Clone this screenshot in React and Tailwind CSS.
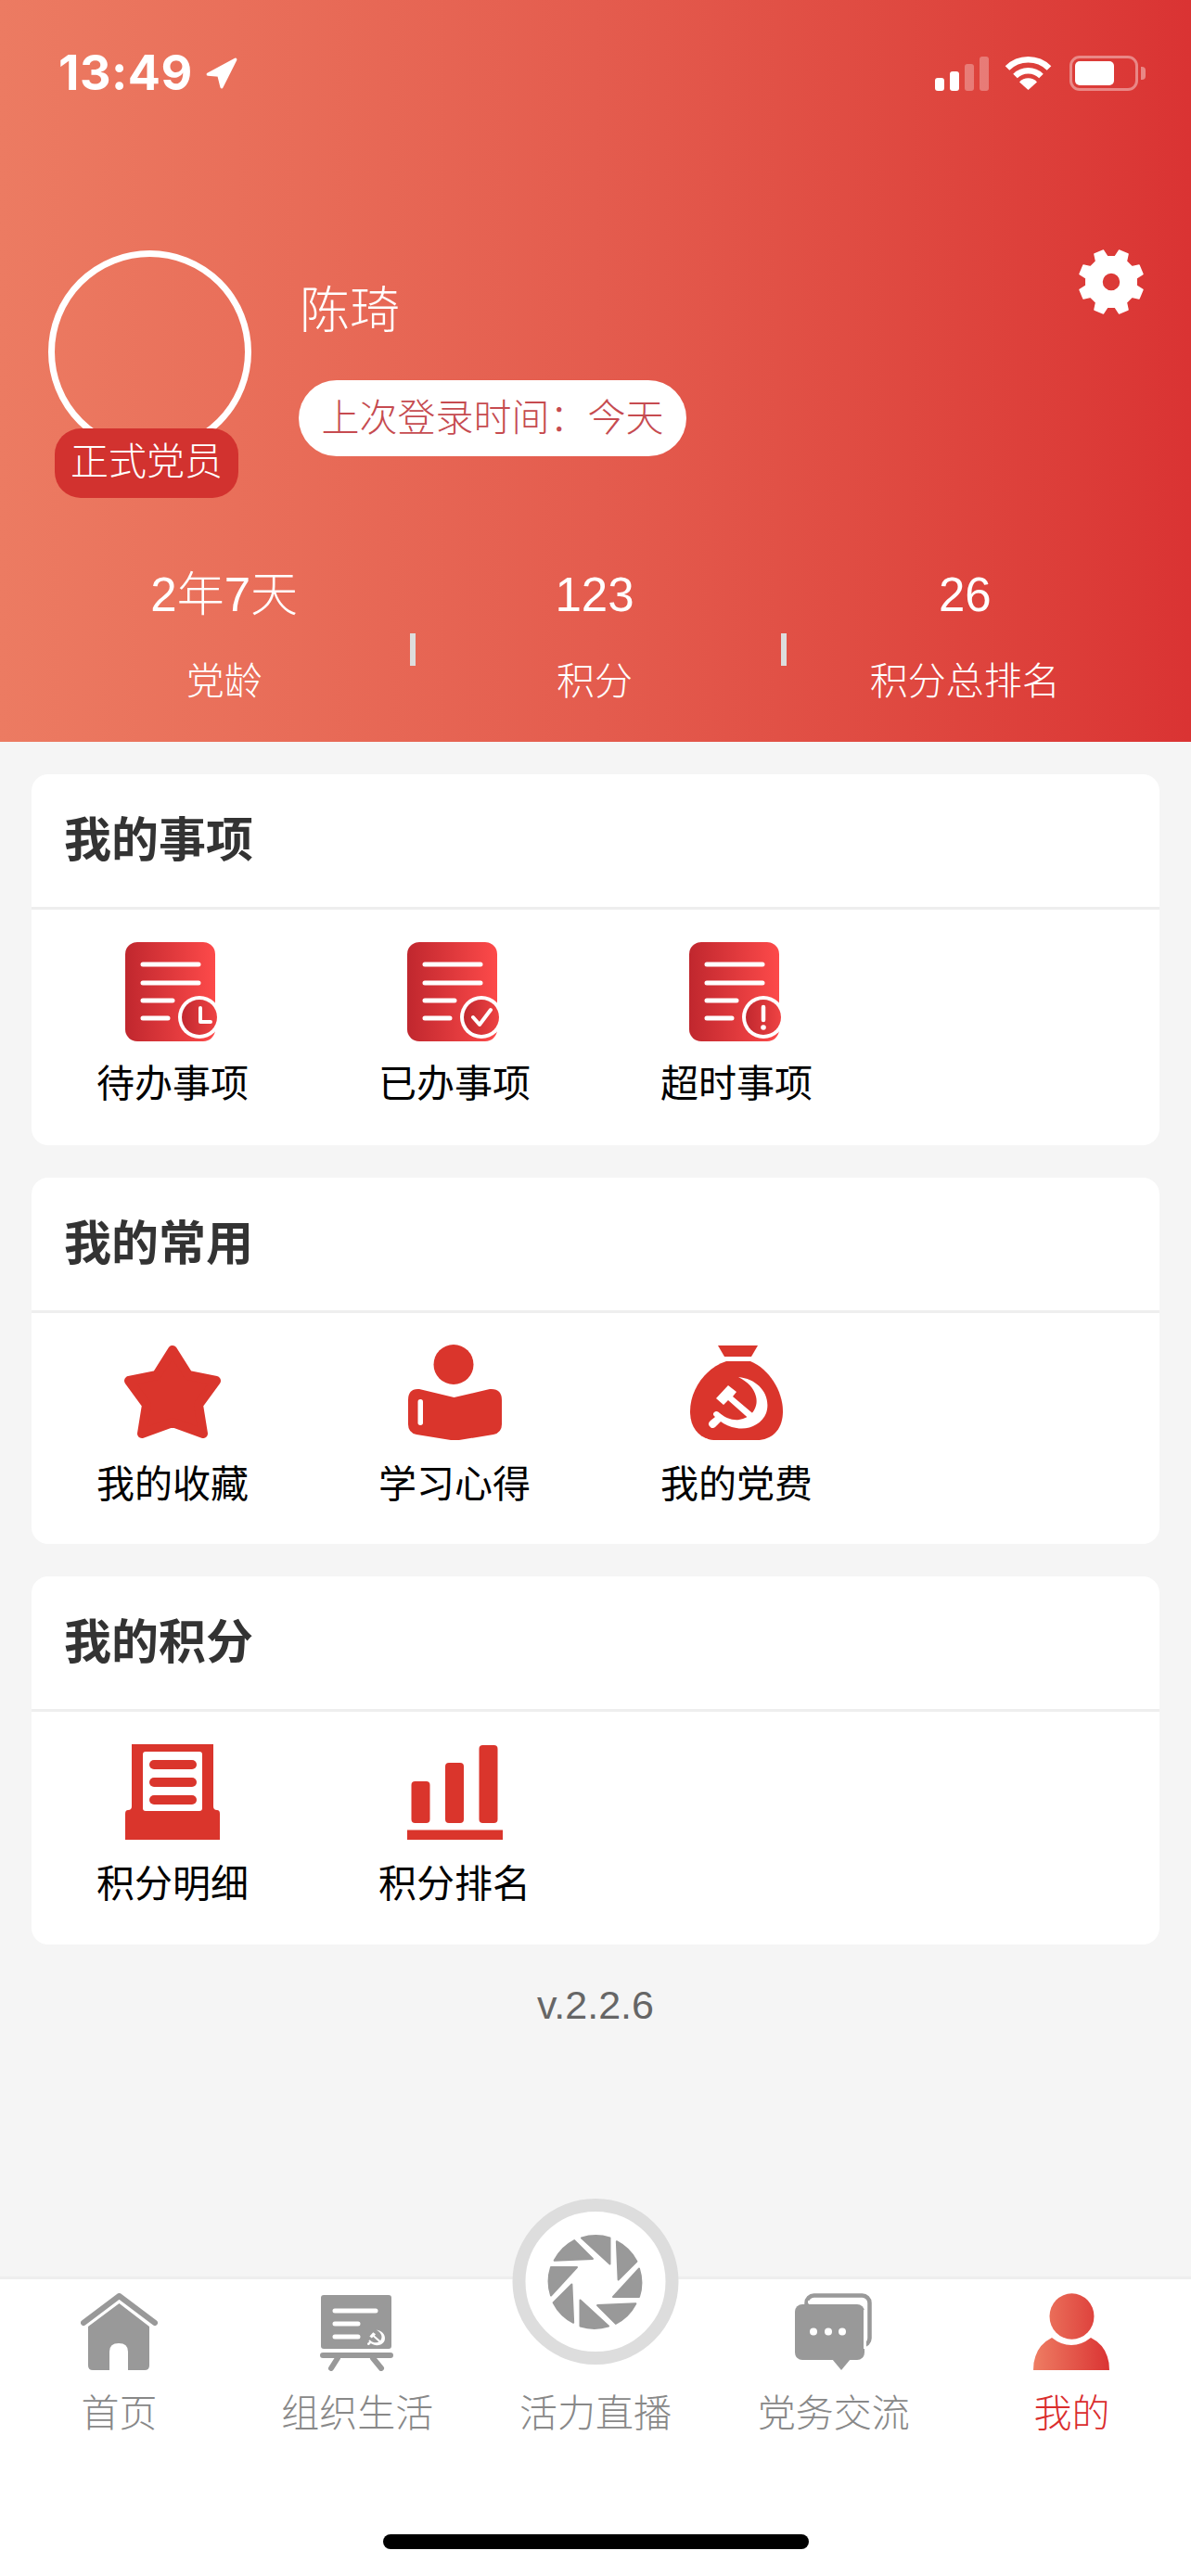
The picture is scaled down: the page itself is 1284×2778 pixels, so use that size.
import React from 'react';

const RED = '#da352c';
const GREY = '#999999';

// 8 teeth, notch at top/bottom/left/right
const gearPath = () => {
  const pts = [];
  for (let i = 0; i < 8; i++) {
    const c = 22.5 + i * 45;
    [[c - 14, 27.5], [c - 8.5, 35], [c + 8.5, 35], [c + 14, 27.5]].forEach(([a, r]) => {
      const t = ((a - 90) * Math.PI) / 180;
      pts.push(`${(35 + r * Math.cos(t)).toFixed(2)} ${(35 + r * Math.sin(t)).toFixed(2)}`);
    });
  }
  return `M${pts.join('L')}Z M35 25 A10 10 0 1 0 35 45 A10 10 0 1 0 35 25Z`;
};

const Emblem = ({ transform, fill = 'white' }) => (
  <g transform={transform} fill={fill} stroke="none">
    <path d="M52 35 C72 37 86 52 83 70 C81 84 64 93 50 90 C43 89 37 86 33 83 L27 89 C25 91 22 90 21 88 C19 86 20 84 22 82 L27 78 C25 76 24 75 26 73 C28 71 30 72 32 74 C38 79 45 82 53 81 C66 79 74 68 71 56 C69 47 62 40 52 35Z" />
    <path d="M28 58 L41 44 L50 51 L46 56 L72 78 L68 84 L41 60 L36 65Z" />
  </g>
);

const DocIcon = ({ id, children }) => (
  <svg width="103" height="107" viewBox="0 0 103 107">
    <defs>
      <linearGradient id={id} x1="0" y1="0" x2="97" y2="0" gradientUnits="userSpaceOnUse">
        <stop offset="0" stopColor="#c0272e" />
        <stop offset="1" stopColor="#fd4a4a" />
      </linearGradient>
      <linearGradient id={`${id}-c`} x1="60" y1="0" x2="100" y2="0" gradientUnits="userSpaceOnUse">
        <stop offset="0" stopColor="#c0272e" />
        <stop offset="1" stopColor="#f04444" />
      </linearGradient>
    </defs>
    <rect width="97" height="107" rx="13" fill={`url(#${id})`} />
    <g stroke="white" strokeWidth="5" strokeLinecap="round">
      <path d="M19 24H79M19 44H79M19 63H51M19 82H46" />
    </g>
    <circle cx="80" cy="81" r="23" fill="white" />
    <circle cx="80" cy="81" r="19" fill={`url(#${id}-c)`} />
    {children}
  </svg>
);

const ClockDoc = () => (
  <DocIcon id="doc-clock">
    <path d="M81 71V86H92" fill="none" stroke="white" strokeWidth="4" strokeLinecap="round" strokeLinejoin="round" />
  </DocIcon>
);
const CheckDoc = () => (
  <DocIcon id="doc-check">
    <path d="M71 81L78 89L90 73" fill="none" stroke="white" strokeWidth="4" strokeLinecap="round" strokeLinejoin="round" />
  </DocIcon>
);
const AlertDoc = () => (
  <DocIcon id="doc-alert">
    <path d="M80 70V84" stroke="white" strokeWidth="4.5" strokeLinecap="round" />
    <circle cx="80" cy="92" r="2.8" fill="white" />
  </DocIcon>
);

const StarIcon = () => (
  <svg width="104" height="105" viewBox="0 0 104 105">
    <polygon
      points="52,6 69,33 99,39 80,65 85,96 52,84 19,96 24,65 5,39 35,33"
      fill={RED}
      stroke={RED}
      strokeWidth="10"
      strokeLinejoin="round"
    />
  </svg>
);

const BookIcon = () => (
  <svg width="101" height="105" viewBox="0 0 101 105">
    <circle cx="49" cy="21.5" r="21.5" fill={RED} />
    <path
      d="M12 48L49.5 57L88 48Q101 47 101 60V86Q101 95 92 97L55 103H46L9 97Q0 95 0 86V60Q0 47 12 48Z"
      fill={RED}
    />
    <rect x="10.5" y="59" width="5.5" height="28" rx="2.7" fill="white" />
  </svg>
);

const BagIcon = () => (
  <svg width="100" height="105" viewBox="0 0 100 105">
    <path d="M30 1H73L66 13H37Z" fill={RED} />
    <path
      d="M39 18H65C85 26 100 50 100 72C100 92 88 103 72 103H28C12 103 0 92 0 72C0 50 15 26 39 18Z"
      fill={RED}
    />
    <Emblem />
  </svg>
);

const LedgerIcon = () => (
  <svg width="102" height="105" viewBox="0 0 102 105">
    <path d="M7 0H95V67Q95 71 99 71Q102 71 102 75V103H0V75Q0 71 3 71Q7 71 7 67Z" fill={RED} />
    <rect x="19" y="8" width="64" height="64" rx="3" fill="white" />
    <rect x="26" y="17" width="51" height="10" rx="5" fill={RED} />
    <rect x="26" y="36" width="51" height="10" rx="5" fill={RED} />
    <rect x="26" y="55" width="51" height="10" rx="5" fill={RED} />
  </svg>
);

const ChartIcon = () => (
  <svg width="103" height="105" viewBox="0 0 103 105" fill={RED}>
    <rect x="4.5" y="40" width="20" height="45" rx="4" />
    <rect x="41" y="20" width="20" height="65" rx="4" />
    <rect x="77.5" y="1" width="20" height="84" rx="4" />
    <rect x="0" y="92.5" width="103" height="10.5" />
  </svg>
);

const HomeIcon = () => (
  <svg width="83" height="84" viewBox="0 0 83 84">
    <path d="M3 32L41.5 3L80 32" fill="none" stroke={GREY} strokeWidth="6" strokeLinecap="round" strokeLinejoin="round" />
    <path
      d="M41.5 11L74 36V78Q74 83 69 83H51V63Q51 54 41 54Q31 54 31 63V83H13Q8 83 8 78V36Z"
      fill={GREY}
    />
  </svg>
);

const BoardIcon = () => (
  <svg width="80" height="84" viewBox="0 0 80 84">
    <rect x="1" y="2" width="76" height="58" rx="3" fill={GREY} />
    <path d="M16 19H60M16 33H41M16 47H41" stroke="white" strokeWidth="5" strokeLinecap="round" />
    <Emblem transform="translate(45 29) scale(0.3)" />
    <rect x="0" y="64" width="79" height="6" rx="3" fill={GREY} />
    <path d="M19 70L12 81M57 70L66 81" stroke={GREY} strokeWidth="6" strokeLinecap="round" />
  </svg>
);

const ApertureIcon = () => (
  <svg width="104" height="104" viewBox="-52 -52 104 104">
    {[0, 45, 90, 135, 180, 225, 270, 315].map((a) => (
      <path
        key={a}
        d="M-14.5 -47.5A50 50 0 0 1 16 -47.5L16 -19.5Z"
        transform={`rotate(${a})`}
        fill={GREY}
        stroke={GREY}
        strokeWidth="2"
        strokeLinejoin="round"
      />
    ))}
  </svg>
);

const ChatIcon = () => (
  <svg width="83" height="84" viewBox="0 0 83 84">
    <rect x="12.5" y="2.5" width="68" height="54" rx="8" fill="none" stroke={GREY} strokeWidth="4.5" />
    <rect x="0" y="12" width="75" height="60" rx="8" fill={GREY} stroke="white" strokeWidth="0" />
    <path d="M75.5 18V60" stroke="white" strokeWidth="3" />
    <path d="M14 9.5H70" stroke="white" strokeWidth="3" />
    <path d="M40 71H60L50 83Z" fill={GREY} />
    <circle cx="20" cy="41.5" r="4" fill="white" />
    <circle cx="36" cy="41.5" r="4" fill="white" />
    <circle cx="51" cy="41.5" r="4" fill="white" />
  </svg>
);

const PersonIcon = () => (
  <svg width="83" height="84" viewBox="0 0 83 84">
    <defs>
      <linearGradient id="person-grad" x1="0" y1="0" x2="83" y2="0" gradientUnits="userSpaceOnUse">
        <stop offset="0" stopColor="#ee7d63" />
        <stop offset="1" stopColor="#da3333" />
      </linearGradient>
    </defs>
    <ellipse cx="41.5" cy="25" rx="24" ry="24.7" fill="url(#person-grad)" />
    <path d="M0 83Q0 58 20 48Q30 56 41 56Q52 56 62 48Q82 58 82 83Z" fill="url(#person-grad)" />
  </svg>
);

const StatusBar = () => (
  <div className="flex items-center justify-between pt-[60px] pl-[63px] pr-[49px] h-[98px]">
    <div className="flex items-center">
      <span className="font-['Inter',sans-serif] font-bold text-[52px] leading-[38px] tracking-[0.5px] text-white">13:49</span>
      <svg width="36" height="36" viewBox="0 0 34 34" className="ml-[13px]">
        <path d="M3 18L31 3L17 31L14 19Z" fill="white" stroke="white" strokeWidth="3" strokeLinejoin="round" />
      </svg>
    </div>
    <div className="flex items-end">
      <div className="flex items-end gap-[6px]">
        <div className="w-[10px] h-[14px] rounded-[3px] bg-white" />
        <div className="w-[10px] h-[21px] rounded-[3px] bg-white" />
        <div className="w-[10px] h-[29px] rounded-[3px] bg-white/30" />
        <div className="w-[10px] h-[37px] rounded-[3px] bg-white/30" />
      </div>
      <svg width="52" height="38" viewBox="0 0 52 38" className="ml-[17px]">
        <path d="M3 13.5A32 32 0 0 1 48 13.5" fill="none" stroke="white" strokeWidth="6.5" />
        <path d="M11.5 22A20 20 0 0 1 39.5 22" fill="none" stroke="white" strokeWidth="6.5" />
        <path d="M25.5 37L16 28.5A13 13 0 0 1 35 28.5Z" fill="white" />
      </svg>
      <div className="flex items-center ml-[18px]">
        <div className="w-[74px] h-[38px] rounded-[11px] border-[3px] border-white/40 p-[3px]">
          <div className="w-[42px] h-[26px] rounded-[5px] bg-white" />
        </div>
        <div className="w-[5px] h-[14px] ml-[3px] rounded-r-[4px] bg-white/40" />
      </div>
    </div>
  </div>
);

const Stat = ({ value, label, divider }) => (
  <div className="relative flex flex-col items-center text-white">
    <div className="text-[51px] leading-[60px] font-light">{value}</div>
    <div className="mt-[35px] text-[41px] leading-[56px] font-light">{label}</div>
    {divider && <div className="absolute top-[71px] right-[-7px] w-[6px] h-[35px] bg-[#dddddd]" />}
  </div>
);

const Header = () => (
  <header className="h-[800px] shrink-0 bg-linear-to-r from-[#ec7b62] via-[#e45c4e] to-[#da3333]">
    <StatusBar />
    <div className="mt-[172px] flex items-start justify-between pl-[52px] pr-[51px]">
      <div className="flex items-start">
        <div className="relative w-[219px] h-[219px] rounded-full border-[7px] border-white">
          <div className="absolute left-0 top-[185px] w-[198px] h-[75px] rounded-[28px] bg-[#d2322f] text-white text-[41px] leading-[72px] text-center font-light">
            正式党员
          </div>
        </div>
        <div className="ml-[51px] pt-[35px]">
          <div className="pl-[1px] text-[54px] leading-[60px] text-white font-light">陈琦</div>
          <div className="mt-[45px] h-[82px] w-[418px] rounded-full bg-white text-[#c64b50] text-[41px] leading-[82px] text-center font-light">
            上次登录时间：今天
          </div>
        </div>
      </div>
      <svg width="70" height="70" viewBox="0 0 70 70" className="-mt-px">
        <path d={gearPath()} fill="white" fillRule="evenodd" stroke="white" strokeWidth="1.5" strokeLinejoin="round" />
      </svg>
    </div>
    <div className="mt-[120px] grid grid-cols-3 pl-[42px] pr-[44px]">
      <Stat value="2年7天" label="党龄" divider />
      <Stat value="123" label="积分" divider />
      <Stat value="26" label="积分总排名" />
    </div>
  </header>
);

const Card = ({ title, pad, items }) => (
  <section className="rounded-[18px] bg-white">
    <div className="h-[146px] border-b-[3px] border-[#eeeeee] pl-[35px] text-[51px] leading-[144px] font-bold text-[#333333]">
      {title}
    </div>
    <div className={`grid grid-cols-4 ${pad}`}>
      {items.map(({ label, Icon }) => (
        <div key={label} className="flex flex-col items-center">
          <Icon />
          <div className="mt-[17px] text-[41px] leading-[58px] -mb-[2px] text-black">{label}</div>
        </div>
      ))}
    </div>
  </section>
);

const Tab = ({ label, active, children }) => (
  <div className="relative flex flex-col items-center">
    <div className="flex h-[84px] items-center justify-center">{children}</div>
    <div className={`mt-[17px] text-[41px] leading-[58px] -mb-[2px] font-light ${active ? 'text-[#da2d2d]' : 'text-[#888888]'}`}>
      {label}
    </div>
  </div>
);

const TabBar = () => (
  <nav className="mt-auto shrink-0 border-t-[3px] border-[#eeeeee] bg-white">
    <div className="grid grid-cols-5 pt-[15px]">
      <Tab label="首页"><HomeIcon /></Tab>
      <Tab label="组织生活"><BoardIcon /></Tab>
      <Tab label="活力直播">
        <div className="absolute left-1/2 top-[-102px] flex h-[179px] w-[179px] -translate-x-1/2 items-center justify-center rounded-full border-[14px] border-[#dddddd] bg-white">
          <ApertureIcon />
        </div>
      </Tab>
      <Tab label="党务交流"><ChatIcon /></Tab>
      <Tab label="我的" active><PersonIcon /></Tab>
    </div>
    <div className="mx-auto mt-[103px] mb-[29px] h-[16px] w-[459px] rounded-full bg-black" />
  </nav>
);

export default function App() {
  return (
    <div className="flex h-[2778px] w-[1284px] flex-col overflow-hidden bg-[#f5f5f5] font-['Liberation_Sans','Noto_Sans_CJK_SC',sans-serif]">
      <Header />
      <main className="flex flex-col gap-[35px] px-[34px] pt-[35px]">
        <Card
          title="我的事项"
          pad="pt-[35px] pb-[39px]"
          items={[
            { label: '待办事项', Icon: ClockDoc },
            { label: '已办事项', Icon: CheckDoc },
            { label: '超时事项', Icon: AlertDoc },
          ]}
        />
        <Card
          title="我的常用"
          pad="pt-[34px] pb-[37px]"
          items={[
            { label: '我的收藏', Icon: StarIcon },
            { label: '学习心得', Icon: BookIcon },
            { label: '我的党费', Icon: BagIcon },
          ]}
        />
        <Card
          title="我的积分"
          pad="pt-[35px] pb-[38px]"
          items={[
            { label: '积分明细', Icon: LedgerIcon },
            { label: '积分排名', Icon: ChartIcon },
          ]}
        />
      </main>
      <div className="mt-[41px] text-center text-[43px] leading-[48px] text-[#666666]">v.2.2.6</div>
      <TabBar />
    </div>
  );
}
